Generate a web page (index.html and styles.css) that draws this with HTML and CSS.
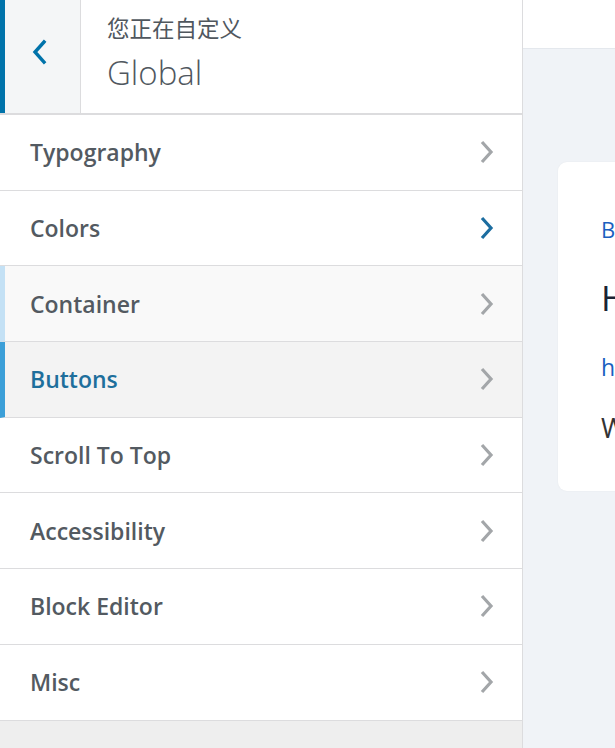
FILE: index.html
```html
<!DOCTYPE html>
<html lang="zh">
<head>
<meta charset="utf-8">
<title>Customizer - Global</title>
<link rel="stylesheet" href="styles.css">
</head>
<body>
<div class="app">
  <aside class="sidebar">
    <header class="panel-head">
      <button class="back" aria-label="返回">
        <svg width="16" height="26" viewBox="0 0 16 26"><path d="M13 3 L4 13 L13 23" fill="none" stroke="#0073aa" stroke-width="3.4" stroke-linecap="square"/></svg>
      </button>
      <div class="head-title">
        <span class="action">您正在自定义</span>
        <span class="title">Global</span>
      </div>
    </header>
    <ul class="sections">
      <li class="section"><span>Typography</span><svg class="chev" viewBox="0 0 16 26"><path d="M3 3 L12 13 L3 23" /></svg></li>
      <li class="section"><span>Colors</span><svg class="chev chev-blue" viewBox="0 0 16 26"><path d="M3 3 L12 13 L3 23" /></svg></li>
      <li class="section section-hover"><span>Container</span><svg class="chev" viewBox="0 0 16 26"><path d="M3 3 L12 13 L3 23" /></svg></li>
      <li class="section section-active"><span>Buttons</span><svg class="chev" viewBox="0 0 16 26"><path d="M3 3 L12 13 L3 23" /></svg></li>
      <li class="section"><span>Scroll To Top</span><svg class="chev" viewBox="0 0 16 26"><path d="M3 3 L12 13 L3 23" /></svg></li>
      <li class="section"><span>Accessibility</span><svg class="chev" viewBox="0 0 16 26"><path d="M3 3 L12 13 L3 23" /></svg></li>
      <li class="section"><span>Block Editor</span><svg class="chev" viewBox="0 0 16 26"><path d="M3 3 L12 13 L3 23" /></svg></li>
      <li class="section"><span>Misc</span><svg class="chev" viewBox="0 0 16 26"><path d="M3 3 L12 13 L3 23" /></svg></li>
    </ul>
  </aside>
  <main class="preview">
    <div class="topbar"></div>
    <div class="canvas">
      <article class="card">
        <div class="line cat">Blog</div>
        <div class="line heading">Hello world!</div>
        <div class="line link">https://example.com</div>
        <div class="line text">Welcome to WordPress.</div>
      </article>
    </div>
  </main>
</div>
</body>
</html>
```
FILE: styles.css
```css
html, body {
  margin: 0;
  padding: 0;
  height: 100%;
  overflow: hidden;
}
body {
  font-family: "Open Sans", "Noto Sans CJK SC", sans-serif;
  background: #f0f3f7;
}
.app {
  display: flex;
  height: 748px;
}
.sidebar {
  width: 522px;
  flex: none;
  background: #eeeeee;
  border-right: 1px solid #dcdcde;
  display: flex;
  flex-direction: column;
}
.panel-head {
  height: 113px;
  background: #fff;
  border-bottom: 2px solid #dcdcde;
  display: flex;
}
.back {
  width: 81px;
  flex: none;
  margin: 0;
  padding: 0 8px 10px 0;
  border: 0;
  border-left: 5px solid #0073aa;
  border-right: 1px solid #dcdcde;
  background: #f4f6f7;
  display: flex;
  align-items: center;
  justify-content: center;
  box-sizing: border-box;
}
.head-title {
  padding-left: 26px;
  display: flex;
  flex-direction: column;
}
.action {
  font-family: "Noto Sans CJK SC", sans-serif;
  font-size: 22.5px;
  line-height: 28px;
  margin-top: 13px;
  color: #50575e;
  font-weight: 400;
}
.title {
  font-size: 33px;
  font-weight: 300;
  color: #50575e;
  line-height: 42px;
  margin-top: 11px;
}
.sections {
  list-style: none;
  margin: 0;
  padding: 0;
}
.section {
  height: 75.7px;
  box-sizing: border-box;
  background: #fff;
  border-bottom: 1px solid #dcdcde;
  padding: 0 27px 0 30px;
  display: flex;
  align-items: center;
  justify-content: space-between;
  font-size: 23px;
  font-weight: 600;
  color: #535a61;
}
.section-hover {
  background: #f9f9f9;
  border-left: 5px solid #c4e1f5;
  padding-left: 25px;
}
.section-active {
  background: #f3f3f3;
  border-left: 5px solid #3b9fd8;
  padding-left: 25px;
  color: #1e6f9c;
}
.chev {
  width: 16px;
  height: 26px;
}
.chev path {
  fill: none;
  stroke: #a3a6a9;
  stroke-width: 3.2;
}
.chev-blue path {
  stroke: #1c6da0;
}
.preview {
  flex: 1;
  display: flex;
  flex-direction: column;
  min-width: 0;
}
.topbar {
  height: 48px;
  background: #fff;
  border-bottom: 1px solid #e4e8ed;
  flex: none;
}
.canvas {
  flex: 1;
  background: #f0f3f7;
  padding: 113px 0 0 35px;
  overflow: hidden;
}
.card {
  width: 400px;
  height: 329px;
  background: #fff;
  border-radius: 9px;
  box-shadow: 0 0 2px rgba(0,0,0,0.05);
  padding: 52px 0 0 43px;
  box-sizing: border-box;
  font-family: "Open Sans", sans-serif;
  white-space: nowrap;
}
.line { display: block; }
.cat {
  font-size: 22px;
  color: #1a5fbf;
  line-height: 30px;
  height: 60px;
}
.heading {
  font-size: 35px;
  color: #1a2233;
  font-weight: 500;
  line-height: 48px;
  height: 78px;
}
.link {
  font-size: 23px;
  color: #1a5fbf;
  line-height: 30px;
  font-weight: 500;
  height: 58px;
}
.text {
  font-size: 27px;
  color: #333;
  line-height: 36px;
}
```
